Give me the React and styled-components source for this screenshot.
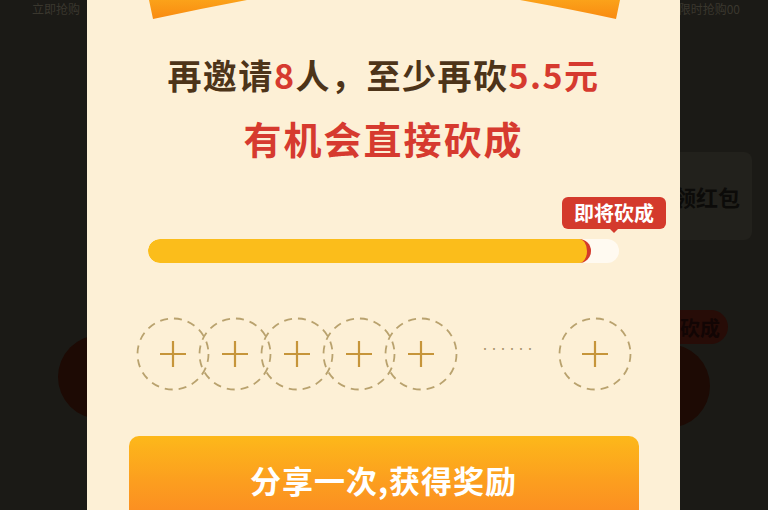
import React from "react";
import styled, { createGlobalStyle } from "styled-components";

const GlobalStyle = createGlobalStyle`
  html, body {
    margin: 0;
    padding: 0;
    background: #1b1a16;
    font-family: "Noto Sans CJK SC", "Noto Sans", sans-serif;
  }
  * {
    box-sizing: border-box;
  }
`;

const Page = styled.div`
  position: relative;
  height: 510px;
  overflow: hidden;
  background: #1b1a16;
  display: flex;
  flex-direction: column;
`;

const TopRow = styled.div`
  display: flex;
  justify-content: space-between;
  padding: 1px 28px 0 32px;
  height: 20px;
  font-size: 12px;
  line-height: 16px;
  color: #3a372e;
`;

const Body = styled.div`
  flex: 1;
  display: flex;
  justify-content: space-between;
  padding: 0 16px 0 58px;
`;

const Side = styled.div`
  display: flex;
  flex-direction: column;
  align-items: ${(p) => (p.right ? "flex-end" : "flex-start")};
  padding-top: ${(p) => p.top}px;
`;

const DimCircle = styled.div`
  width: 84px;
  height: 84px;
  border-radius: 50%;
  background: #1d0a04;
  margin-right: ${(p) => p.shift || 0}px;
`;

const DimCard = styled.div`
  width: 120px;
  height: 88px;
  border-radius: 8px;
  background: #22211c;
  display: flex;
  align-items: center;
  justify-content: flex-end;
  padding-right: 12px;
  font-size: 22px;
  font-weight: 700;
  color: #0c0b09;
`;

const DimBadge = styled.div`
  margin-top: 70px;
  margin-right: 24px;
  width: 90px;
  height: 34px;
  border-radius: 17px;
  background: #270c07;
  display: flex;
  align-items: center;
  justify-content: flex-end;
  padding-right: 8px;
  font-size: 20px;
  font-weight: 700;
  color: #120504;
`;

const Overlay = styled.div`
  position: absolute;
  top: 0;
  left: 87px;
  width: 593px;
  height: 540px;
  background: #fdf0d6;
  display: flex;
  flex-direction: column;
  align-items: center;
`;

const Banner = styled.svg`
  display: block;
  width: 593px;
  height: 22px;
`;

const Title = styled.div`
  margin-top: 30px;
  font-size: 34px;
  line-height: 46px;
  font-weight: 700;
  color: #4d3419;
  letter-spacing: 1.5px;
`;

const Sub = styled.div`
  margin-top: 16px;
  font-size: 38px;
  line-height: 48px;
  font-weight: 700;
  color: #d63a2f;
  letter-spacing: 2px;
`;

const Red = styled.span`
  color: #d63a2f;
`;

const ProgressWrap = styled.div`
  position: relative;
  margin-top: 35px;
  padding-top: 42px;
  width: 471px;
`;

const Tip = styled.div`
  position: absolute;
  top: 0;
  right: -47px;
  width: 104px;
  height: 32px;
  border-radius: 6px;
  background: #d43a2c;
  color: #fff;
  font-size: 20px;
  font-weight: 700;
  line-height: 32px;
  text-align: center;
  &::after {
    content: "";
    position: absolute;
    left: 50%;
    bottom: -4px;
    margin-left: -4px;
    border-left: 4px solid transparent;
    border-right: 4px solid transparent;
    border-top: 4px solid #d43a2c;
  }
`;

const Track = styled.div`
  width: 100%;
  height: 24px;
  border-radius: 12px;
  background: #fffaf1;
  overflow: hidden;
`;

const Fill = styled.div`
  height: 100%;
  border-radius: 12px;
  background: #fbbd1b;
  border-right: 4px solid #d43a2c;
`;

const Slots = styled.div`
  margin-top: 54px;
  display: flex;
  align-items: center;
  width: 496px;
`;

const Slot = styled.svg`
  flex: none;
  width: 74px;
  height: 74px;
  margin-left: ${(p) => (p.first ? 0 : -12)}px;
`;

const Dots = styled.div`
  flex: none;
  width: 100px;
  text-align: center;
  font-size: 9px;
  letter-spacing: 0;
  color: #a8916a;
  line-height: 10px;
  margin-top: -10px;
`;

const Share = styled.button`
  margin-top: 45px;
  width: 510px;
  height: 86px;
  border: 0;
  border-radius: 10px;
  background: linear-gradient(180deg, #fdb81a 0%, #fc9d1f 55%, #fb8a22 100%);
  color: #fff;
  font-family: inherit;
  font-size: 31px;
  font-weight: 700;
  letter-spacing: 1px;
`;

function PlusSlot({ first }) {
  return (
    <Slot first={first} viewBox="0 0 74 74">
      <circle
        cx="37"
        cy="37"
        r="35.5"
        fill="none"
        stroke="#b9a26e"
        strokeWidth="1.8"
        strokeDasharray="8 6"
      />
      <path d="M24 37h26M37 24v26" stroke="#c6953a" strokeWidth="2.2" />
    </Slot>
  );
}

export default function App() {
  const progress = 94;
  return (
    <>
      <GlobalStyle />
      <Page>
        <TopRow>
          <span>立即抢购</span>
          <span>限时抢购00</span>
        </TopRow>
        <Body>
          <Side top={315}>
            <DimCircle />
          </Side>
          <Side right top={132}>
            <DimCard>领红包</DimCard>
            <DimBadge>砍成</DimBadge>
            <DimCircle shift={42} />
          </Side>
        </Body>

        <Overlay>
          <Banner viewBox="0 0 593 22">
            <defs>
              <linearGradient id="bn" x1="0" y1="0" x2="0" y2="1">
                <stop offset="0" stopColor="#fba21a" />
                <stop offset="1" stopColor="#f98a10" />
              </linearGradient>
            </defs>
            <path d="M62 0 L66 19 Q112 9 160 0 Z" fill="url(#bn)" />
            <path d="M533 0 L529 19 Q483 9 433 0 Z" fill="url(#bn)" />
          </Banner>
          <Title>
            再邀请<Red>8</Red>人，至少再砍<Red>5.5元</Red>
          </Title>
          <Sub>有机会直接砍成</Sub>
          <ProgressWrap>
            <Tip>即将砍成</Tip>
            <Track>
              <Fill style={{ width: `${progress}%` }} />
            </Track>
          </ProgressWrap>
          <Slots>
            {[0, 1, 2, 3, 4].map((i) => (
              <PlusSlot key={i} first={i === 0} />
            ))}
            <Dots>······</Dots>
            <PlusSlot first />
          </Slots>
          <Share>分享一次,获得奖励</Share>
        </Overlay>
      </Page>
    </>
  );
}
